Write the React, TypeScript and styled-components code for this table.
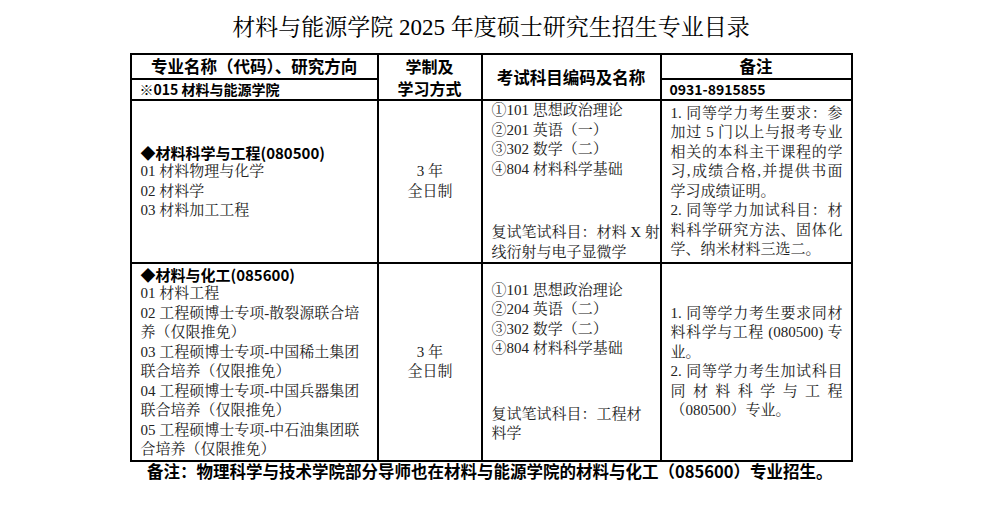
import React from "react";
import styled, { createGlobalStyle } from "styled-components";

const SERIF = '"Liberation Serif", "Noto Serif CJK SC", "Noto Sans CJK SC", serif';
const HEI = '"Noto Sans CJK SC", "Liberation Sans", sans-serif';

const Global = createGlobalStyle`
  html, body { margin: 0; padding: 0; background: #ffffff; }
  body { font-family: ${SERIF}; color: #111; }
`;

const Page = styled.div`
  width: 982px;
  height: 509px;
  display: flex;
  flex-direction: column;
  align-items: center;
  overflow: hidden;
`;

const Title = styled.h1`
  margin: 0;
  padding-top: 13px;
  height: 53px;
  box-sizing: border-box;
  font-family: ${SERIF};
  font-weight: 400;
  font-size: 23px;
  line-height: 30px;
  color: #000;
  text-align: center;
`;

const Table = styled.table`
  width: 721px;
  border-collapse: collapse;
  table-layout: fixed;
  border: 2px solid #000;
`;

const HeadCell = styled.th<{ $align?: "left" | "center"; $tall?: boolean }>`
  border: 2px solid #000;
  padding: 0 8px;
  font-family: ${HEI};
  font-weight: 700;
  font-size: ${(p) => (p.$align === "left" ? "14px" : p.$tall ? "16px" : "16.5px")};
  line-height: ${(p) => (p.$tall ? "22px" : "19px")};
  color: #000;
  text-align: ${(p) => p.$align ?? "center"};
  vertical-align: middle;
  white-space: nowrap;
`;

const Cell = styled.td<{ $center?: boolean }>`
  border: 2px solid #000;
  padding: 0 8px 0 9px;
  font-family: ${SERIF};
  font-size: 15px;
  line-height: 19.5px;
  color: #222;
  text-align: ${(p) => (p.$center ? "center" : "left")};
  vertical-align: middle;
`;

const HeadRow = styled.tr<{ $h: number }>`
  height: ${(p) => p.$h}px;
`;

const BodyRow = styled.tr<{ $h: number }>`
  height: ${(p) => p.$h}px;
`;

const Line = styled.span<{ $justify?: boolean }>`
  display: block;
  white-space: nowrap;
  text-align: ${(p) => (p.$justify ? "justify" : "inherit")};
  text-align-last: ${(p) => (p.$justify ? "justify" : "auto")};
`;

const Major = styled.span`
  display: block;
  white-space: nowrap;
  font-family: ${HEI};
  font-weight: 700;
  font-size: 15px;
  color: #000;
`;

const Block = styled.div<{ $gap?: number }>`
  margin-top: ${(p) => p.$gap ?? 0}px;
`;

const Note = styled.p`
  align-self: stretch;
  margin: 0;
  padding: 0 0 0 147px;
  font-family: ${HEI};
  font-weight: 700;
  font-size: 16.5px;
  line-height: 20px;
  color: #000;
  white-space: nowrap;
`;

type L = { t: string; j?: boolean };

const Lines: React.FC<{ lines: L[] }> = ({ lines }) => (
  <>
    {lines.map((l, i) => (
      <Line key={i} $justify={l.j}>
        {l.t}
      </Line>
    ))}
  </>
);

const exam1: L[] = [
  { t: "①101 思想政治理论" },
  { t: "②201 英语（一）" },
  { t: "③302 数学（二）" },
  { t: "④804 材料科学基础" },
];
const retest1: L[] = [
  { t: "复试笔试科目：材料 X 射", j: true },
  { t: "线衍射与电子显微学" },
];
const exam2: L[] = [
  { t: "①101 思想政治理论" },
  { t: "②204 英语（二）" },
  { t: "③302 数学（二）" },
  { t: "④804 材料科学基础" },
];
const retest2: L[] = [{ t: "复试笔试科目：工程材" }, { t: "料学" }];

const note1: L[] = [
  { t: "1. 同等学力考生要求：参", j: true },
  { t: "加过 5 门以上与报考专业", j: true },
  { t: "相关的本科主干课程的学", j: true },
  { t: "习,成绩合格,并提供书面", j: true },
  { t: "学习成绩证明。" },
  { t: "2. 同等学力加试科目：材", j: true },
  { t: "料科学研究方法、固体化", j: true },
  { t: "学、纳米材料三选二。" },
];
const note2: L[] = [
  { t: "1. 同等学力考生要求同材", j: true },
  { t: "料科学与工程 (080500) 专", j: true },
  { t: "业。" },
  { t: "2. 同等学力考生加试科目", j: true },
  { t: "同材料科学与工程", j: true },
  { t: "（080500）专业。" },
];

const dirs1: L[] = [
  { t: "01 材料物理与化学" },
  { t: "02 材料学" },
  { t: "03 材料加工工程" },
];
const dirs2: L[] = [
  { t: "01 材料工程" },
  { t: "02 工程硕博士专项-散裂源联合培" },
  { t: "养（仅限推免）" },
  { t: "03 工程硕博士专项-中国稀土集团" },
  { t: "联合培养（仅限推免）" },
  { t: "04 工程硕博士专项-中国兵器集团" },
  { t: "联合培养（仅限推免）" },
  { t: "05 工程硕博士专项-中石油集团联" },
  { t: "合培养（仅限推免）" },
];

export default function App() {
  return (
    <>
      <Global />
      <Page>
        <Title>材料与能源学院 2025 年度硕士研究生招生专业目录</Title>
        <Table>
          <colgroup>
            <col style={{ width: 247 }} />
            <col style={{ width: 104 }} />
            <col style={{ width: 179 }} />
            <col style={{ width: 191 }} />
          </colgroup>
          <thead>
            <HeadRow $h={24}>
              <HeadCell>专业名称（代码）、研究方向</HeadCell>
              <HeadCell rowSpan={2} $tall>
                <Line>学制及</Line>
                <Line>学习方式</Line>
              </HeadCell>
              <HeadCell rowSpan={2}>考试科目编码及名称</HeadCell>
              <HeadCell>备注</HeadCell>
            </HeadRow>
            <HeadRow $h={20}>
              <HeadCell $align="left">※015 材料与能源学院</HeadCell>
              <HeadCell $align="left">0931-8915855</HeadCell>
            </HeadRow>
          </thead>
          <tbody>
            <BodyRow $h={162}>
              <Cell>
                <Major>◆材料科学与工程(080500)</Major>
                <Lines lines={dirs1} />
              </Cell>
              <Cell $center>
                <Line>3 年</Line>
                <Line>全日制</Line>
              </Cell>
              <Cell>
                <Block>
                  <Lines lines={exam1} />
                </Block>
                <Block $gap={44}>
                  <Lines lines={retest1} />
                </Block>
              </Cell>
              <Cell>
                <Lines lines={note1} />
              </Cell>
            </BodyRow>
            <BodyRow $h={195}>
              <Cell>
                <Major>◆材料与化工(085600)</Major>
                <Lines lines={dirs2} />
              </Cell>
              <Cell $center>
                <Line>3 年</Line>
                <Line>全日制</Line>
              </Cell>
              <Cell>
                <Block>
                  <Lines lines={exam2} />
                </Block>
                <Block $gap={46}>
                  <Lines lines={retest2} />
                </Block>
              </Cell>
              <Cell>
                <Lines lines={note2} />
              </Cell>
            </BodyRow>
          </tbody>
        </Table>
        <Note>备注：物理科学与技术学院部分导师也在材料与能源学院的材料与化工（085600）专业招生。</Note>
      </Page>
    </>
  );
}
